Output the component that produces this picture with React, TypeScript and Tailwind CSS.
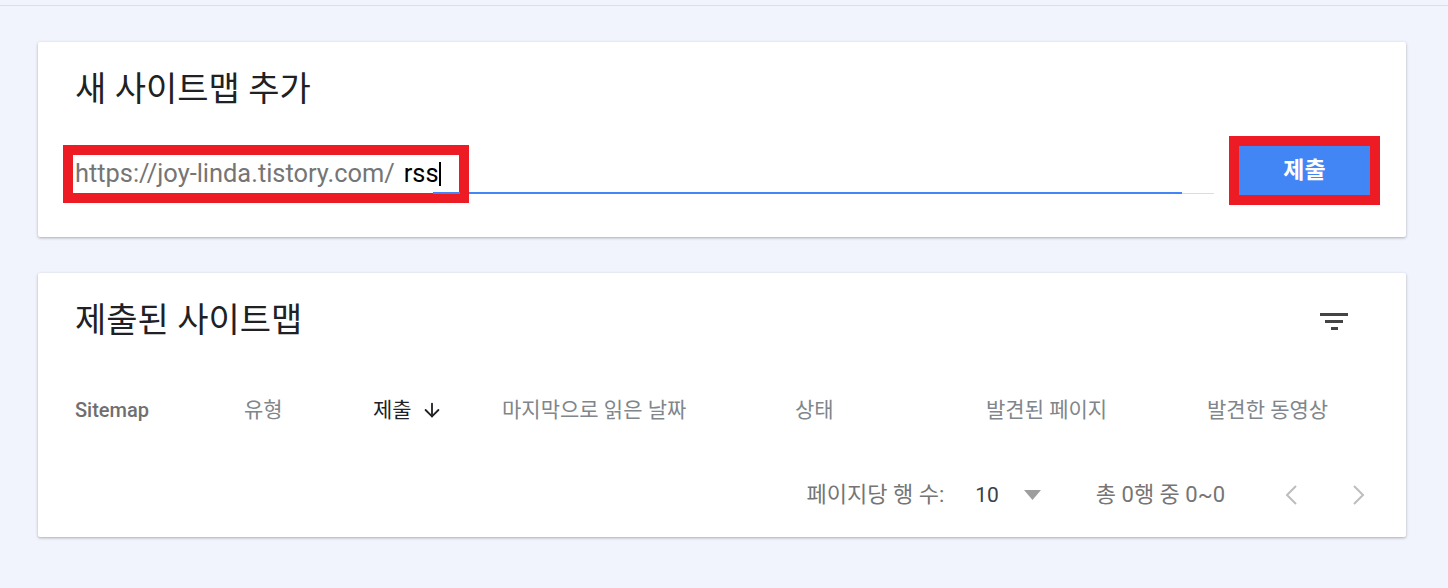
import { ArrowDown } from 'lucide-react'

const font = { fontFamily: 'Roboto, "Noto Sans CJK KR", sans-serif' }

const columns = [
  { label: '유형', w: 'w-[129px]' },
  { label: '제출', w: 'w-[129px]', active: true },
  { label: '마지막으로 읽은 날짜', w: 'w-[293px]' },
  { label: '상태', w: 'w-[191px]' },
  { label: '발견된 페이지', w: 'w-[221px]' },
  { label: '발견한 동영상', w: 'flex-1' },
]

function FilterIcon() {
  return (
    <svg width="28" height="18" viewBox="0 0 28 18" className="text-[#444]">
      <rect x="0" y="0" width="28" height="3" fill="currentColor" />
      <rect x="5" y="7" width="18" height="3" fill="currentColor" />
      <rect x="11" y="14" width="7" height="3" fill="currentColor" />
    </svg>
  )
}

function Chevron({ dir }: { dir: 'left' | 'right' }) {
  return (
    <svg width="13" height="20" viewBox="0 0 13 20" fill="none">
      <polyline
        points={dir === 'left' ? '11,1 2,10 11,19' : '2,1 11,10 2,19'}
        stroke="#bdbdbd"
        strokeWidth="2"
      />
    </svg>
  )
}

export default function App() {
  return (
    <div className="min-h-[588px] bg-[#f1f4fc] text-[#212121]" style={font}>
      <div className="h-[6px] border-b border-[#dcdfe4]" />
      <div className="px-[38px] pt-[36px] pb-[50px] flex flex-col gap-[36px] w-[1444px]">
        {/* add sitemap */}
        <section className="bg-white rounded-[2px] shadow-[0_1px_3px_rgba(0,0,0,0.3)] h-[195px] pl-[25px] pr-[26px]">
          <h2 className="pt-[27px] pl-[12px] text-[34px] leading-[40px] font-normal text-[#202124]">새 사이트맵 추가</h2>
          <div className="mt-[36px] flex items-start">
            <div className="relative flex-1 h-[58px] mr-[15px]">
              <div className="absolute left-[10px] right-[32px] top-[47px] h-[2px] bg-[#4285f4]" />
              <div className="absolute right-0 w-[32px] top-[48px] h-px bg-[#dadce0]" />
              <div className="absolute left-0 top-0 w-[406px] h-[58px] border-[10px] border-[#ed1c24] bg-white flex items-center pl-[2px]">
                <span className="text-[25.4px] text-[#757575] leading-none">https://joy-linda.tistory.com/</span>
                <span className="text-[25.4px] text-black leading-none ml-[9px]">rss</span>
                <span className="w-[2px] h-[24px] bg-black" />
              </div>
              <div className="absolute left-[370px] top-[47px] w-[27px] h-[2px] bg-[#4285f4]" />
            </div>
            <div className="-mt-[9px] border-[10px] border-[#ed1c24] w-[151px] h-[69px]">
              <button className="w-full h-full bg-[#4285f4] text-white text-[23px] font-bold leading-none">제출</button>
            </div>
          </div>
        </section>

        {/* submitted sitemaps */}
        <section className="bg-white rounded-[2px] shadow-[0_1px_3px_rgba(0,0,0,0.3)] h-[264px] pl-[37px] pr-[41px]">
          <div className="flex items-center justify-between pt-[27px]">
            <h2 className="text-[34px] leading-[40px] font-normal text-[#202124]">제출된 사이트맵</h2>
            <div className="mr-[17px] mt-[4px]">
              <FilterIcon />
            </div>
          </div>
          <div className="mt-[56px] flex items-center text-[21px] text-[#80868b] leading-[28px]">
            <div className="w-[169px] font-medium text-[#6f6f6f] text-[20px]">Sitemap</div>
            {columns.map((c) => (
              <div key={c.label} className={`${c.w} flex items-center ${c.active ? 'text-[#202124]' : ''}`}>
                {c.label}
                {c.active && <ArrowDown size={22} strokeWidth={2} className="ml-[9px] text-[#202124]" />}
              </div>
            ))}
          </div>
          <div className="mt-[57px] flex items-center justify-end text-[22px] text-[#757575] leading-[28px]">
            <span>페이지당 행 수:</span>
            <span className="ml-[31px] text-[21px] text-[#3c4043]">10</span>
            <svg width="17" height="10" viewBox="0 0 17 10" className="ml-[25px]">
              <path d="M0 0 L17 0 L8.5 10 Z" fill="#9e9e9e" />
            </svg>
            <span className="ml-[55px]">총 0행 중 0~0</span>
            <span className="ml-[60px]">
              <Chevron dir="left" />
            </span>
            <span className="ml-[54px]">
              <Chevron dir="right" />
            </span>
          </div>
        </section>
      </div>
    </div>
  )
}
